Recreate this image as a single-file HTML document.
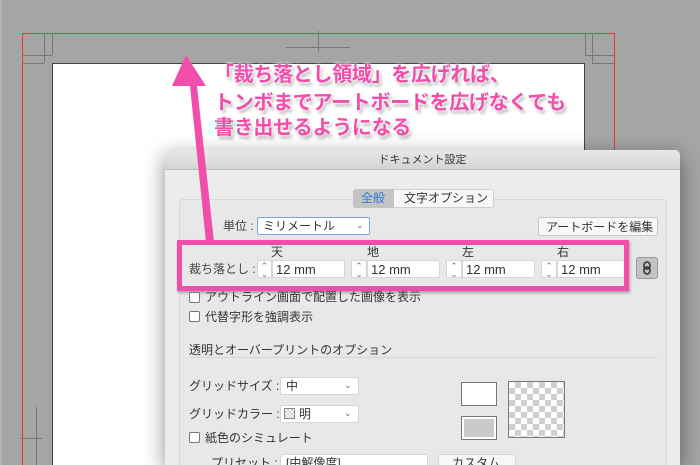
<!DOCTYPE html>
<html style="width:700px;height:465px;overflow:hidden"><head><meta charset="utf-8"><style>
*{margin:0;padding:0;box-sizing:border-box}
body{width:700px;height:465px;overflow:hidden;background:#a5a5a5;position:relative;font-family:"Liberation Sans","Noto Sans CJK JP",sans-serif;color:#333}
.a{position:absolute}
.t{position:absolute;font-size:12px;white-space:nowrap;line-height:14px;color:#333}
.in{position:absolute;background:#fff;border:1px solid #d6d6d6;border-radius:2px}
.st{position:absolute;background:#fff;border:1px solid #d6d6d6;font-size:9px;color:#777;text-align:center;line-height:8px}
.cb{position:absolute;width:11px;height:11px;border:1px solid #777;background:#fff;border-radius:2px}
.pk{position:absolute;left:214px;font-size:20px;font-weight:bold;color:#f04eaa;white-space:nowrap;letter-spacing:-0.3px;text-shadow:0 0 3px #fff,0 0 3px #fff,2px 3px 3px rgba(0,0,0,.35)}
</style></head><body>
<div class="a" style="left:0;top:0;width:2px;height:465px;background:#b5b5b5"></div>
<div class="a" style="left:52px;top:63px;width:533px;height:410px;background:#fff;border:1px solid #444"></div>
<div class="a" style="left:22px;top:33px;width:593px;height:440px;border:1px solid #e8393a;border-bottom:none"></div>
<div class="a" style="left:44px;top:33px;width:1px;height:30px;background:#777"></div>
<div class="a" style="left:52px;top:33px;width:1px;height:22px;background:#777"></div>
<div class="a" style="left:22px;top:55px;width:30px;height:1px;background:#777"></div>
<div class="a" style="left:22px;top:63px;width:22px;height:1px;background:#777"></div>
<div class="a" style="left:585px;top:33px;width:1px;height:22px;background:#777"></div>
<div class="a" style="left:592px;top:33px;width:1px;height:30px;background:#777"></div>
<div class="a" style="left:585px;top:55px;width:29px;height:1px;background:#777"></div>
<div class="a" style="left:592px;top:63px;width:22px;height:1px;background:#777"></div>
<div class="a" style="left:286px;top:47px;width:64px;height:1px;background:#777"></div>
<div class="a" style="left:318px;top:31px;width:1px;height:21px;background:#777"></div>
<div class="a" style="left:36px;top:407px;width:1px;height:60px;background:#777"></div>
<div class="a" style="left:20px;top:438px;width:22px;height:1px;background:#777"></div>
<div class="a" style="left:165px;top:150px;width:515px;height:315px;background:#ececec;border-radius:5px 5px 0 0;box-shadow:0 6px 22px rgba(0,0,0,.45)"></div>
<div class="a" style="left:165px;top:150px;width:515px;height:20px;background:linear-gradient(#e8e8e8,#d4d4d4);border-radius:5px 5px 0 0;border-bottom:1px solid #bdbdbd"></div>
<div class="t" style="left:165px;width:515px;top:153px;text-align:center;font-size:11px">ドキュメント設定</div>
<div class="a" style="left:179px;top:199px;width:488px;height:280px;border:1px solid #d8d8d8;border-radius:4px;background:#e8e8e8"></div>
<div class="a" style="left:353px;top:189px;width:141px;height:19px;border:1px solid #cfcfcf;background:#f7f7f7;border-radius:3px"></div>
<div class="a" style="left:353px;top:189px;width:41px;height:19px;background:#c4c4c4;border-radius:3px 0 0 3px"></div>
<div class="t" style="left:361px;top:191px;color:#2a7bd6">全般</div>
<div class="t" style="left:404px;top:191px">文字オプション</div>
<div class="t" style="left:223px;top:219px;color:#444">単位 :</div>
<div class="in" style="left:257px;top:217px;width:113px;height:18px;border:1px solid #7aa7e0"></div>
<div class="t" style="left:263px;top:219px">ミリメートル</div>
<div class="t" style="left:356px;top:218px;font-size:9px;color:#666">⌄</div>
<div class="in" style="left:538px;top:217px;width:120px;height:19px;background:#f7f7f7;border-color:#c8c8c8"></div>
<div class="t" style="left:546px;top:220px">アートボードを編集</div>
<div class="t" style="left:271px;top:245px">天</div>
<div class="t" style="left:367px;top:245px">地</div>
<div class="t" style="left:462px;top:245px">左</div>
<div class="t" style="left:557px;top:245px">右</div>
<div class="t" style="left:189px;top:262px;color:#444">裁ち落とし :</div>
<div class="st" style="left:257px;top:260px;width:15px;height:18px;padding-top:1px">⌃<br>⌄</div><div class="in" style="left:272px;top:260px;width:73px;height:18px"></div><div class="t" style="left:276px;top:263px;font-size:13px">12 mm</div>
<div class="st" style="left:351px;top:260px;width:16px;height:18px;padding-top:1px">⌃<br>⌄</div><div class="in" style="left:367px;top:260px;width:73px;height:18px"></div><div class="t" style="left:371px;top:263px;font-size:13px">12 mm</div>
<div class="st" style="left:446px;top:260px;width:16px;height:18px;padding-top:1px">⌃<br>⌄</div><div class="in" style="left:462px;top:260px;width:73px;height:18px"></div><div class="t" style="left:466px;top:263px;font-size:13px">12 mm</div>
<div class="st" style="left:541px;top:260px;width:16px;height:18px;padding-top:1px">⌃<br>⌄</div><div class="in" style="left:557px;top:260px;width:68px;height:18px"></div><div class="t" style="left:561px;top:263px;font-size:13px">12 mm</div>
<div class="a" style="left:636px;top:257px;width:22px;height:22px;background:#c2c2c2;border:1px solid #999;border-radius:3px"></div>
<svg class="a" style="left:636px;top:257px" width="22" height="22"><rect x="8" y="5" width="6" height="7" rx="3" fill="none" stroke="#333" stroke-width="1.6"/><rect x="8" y="10" width="6" height="7" rx="3" fill="none" stroke="#333" stroke-width="1.6"/></svg>
<div class="a" style="left:177px;top:240px;width:452px;height:51px;border:5px solid #f04eaa;box-shadow:1px 2px 3px rgba(0,0,0,.3)"></div>
<div class="cb" style="left:189px;top:292px"></div><div class="t" style="left:205px;top:290px">アウトライン画面で配置した画像を表示</div>
<div class="cb" style="left:189px;top:311px"></div><div class="t" style="left:205px;top:310px">代替字形を強調表示</div>
<div class="t" style="left:189px;top:343px">透明とオーバープリントのオプション</div>
<div class="a" style="left:189px;top:357px;width:469px;height:1px;background:#d6d6d6"></div>
<div class="t" style="left:189px;top:379px">グリッドサイズ :</div>
<div class="in" style="left:280px;top:377px;width:79px;height:18px"></div>
<div class="t" style="left:286px;top:379px">中</div><div class="t" style="left:344px;top:378px;font-size:9px;color:#666">⌄</div>
<div class="t" style="left:189px;top:407px">グリッドカラー :</div>
<div class="in" style="left:280px;top:405px;width:79px;height:18px"></div>
<div class="a" style="left:284px;top:408px;width:11px;height:11px;border:1px solid #888;background:repeating-conic-gradient(#ccc 0 25%,#fff 0 50%) 0 0/4px 4px"></div>
<div class="t" style="left:299px;top:407px">明</div><div class="t" style="left:344px;top:406px;font-size:9px;color:#666">⌄</div>
<div class="cb" style="left:189px;top:432px"></div><div class="t" style="left:205px;top:431px">紙色のシミュレート</div>
<div class="t" style="left:211px;top:456px">プリセット :</div>
<div class="in" style="left:280px;top:454px;width:148px;height:18px"></div><div class="t" style="left:286px;top:456px">[中解像度]</div>
<div class="in" style="left:438px;top:454px;width:78px;height:18px;background:#f7f7f7"></div><div class="t" style="left:452px;top:456px">カスタム</div>
<div class="a" style="left:461px;top:382px;width:36px;height:24px;background:#fff;border:1px solid #777"></div>
<div class="a" style="left:461px;top:416px;width:36px;height:24px;background:#c9c9c9;border:1px solid #777;box-shadow:inset 0 0 0 2px #fff"></div>
<div class="a" style="left:508px;top:381px;width:57px;height:57px;border:1px solid #777;background:repeating-conic-gradient(#cfcfcf 0 25%,#fff 0 50%) 0 0/12px 12px"></div>
<svg class="a" style="left:0;top:0" width="700" height="465"><polygon points="186,55 206,86 197,86 214,242 206,242 190,86 172,86" fill="#f04eaa"/></svg>
<div class="pk" style="top:58px">「裁ち落とし領域」を広げれば、</div>
<div class="pk" style="top:86px">トンボまでアートボードを広げなくても</div>
<div class="pk" style="top:111px">書き出せるようになる</div>
</body></html>
